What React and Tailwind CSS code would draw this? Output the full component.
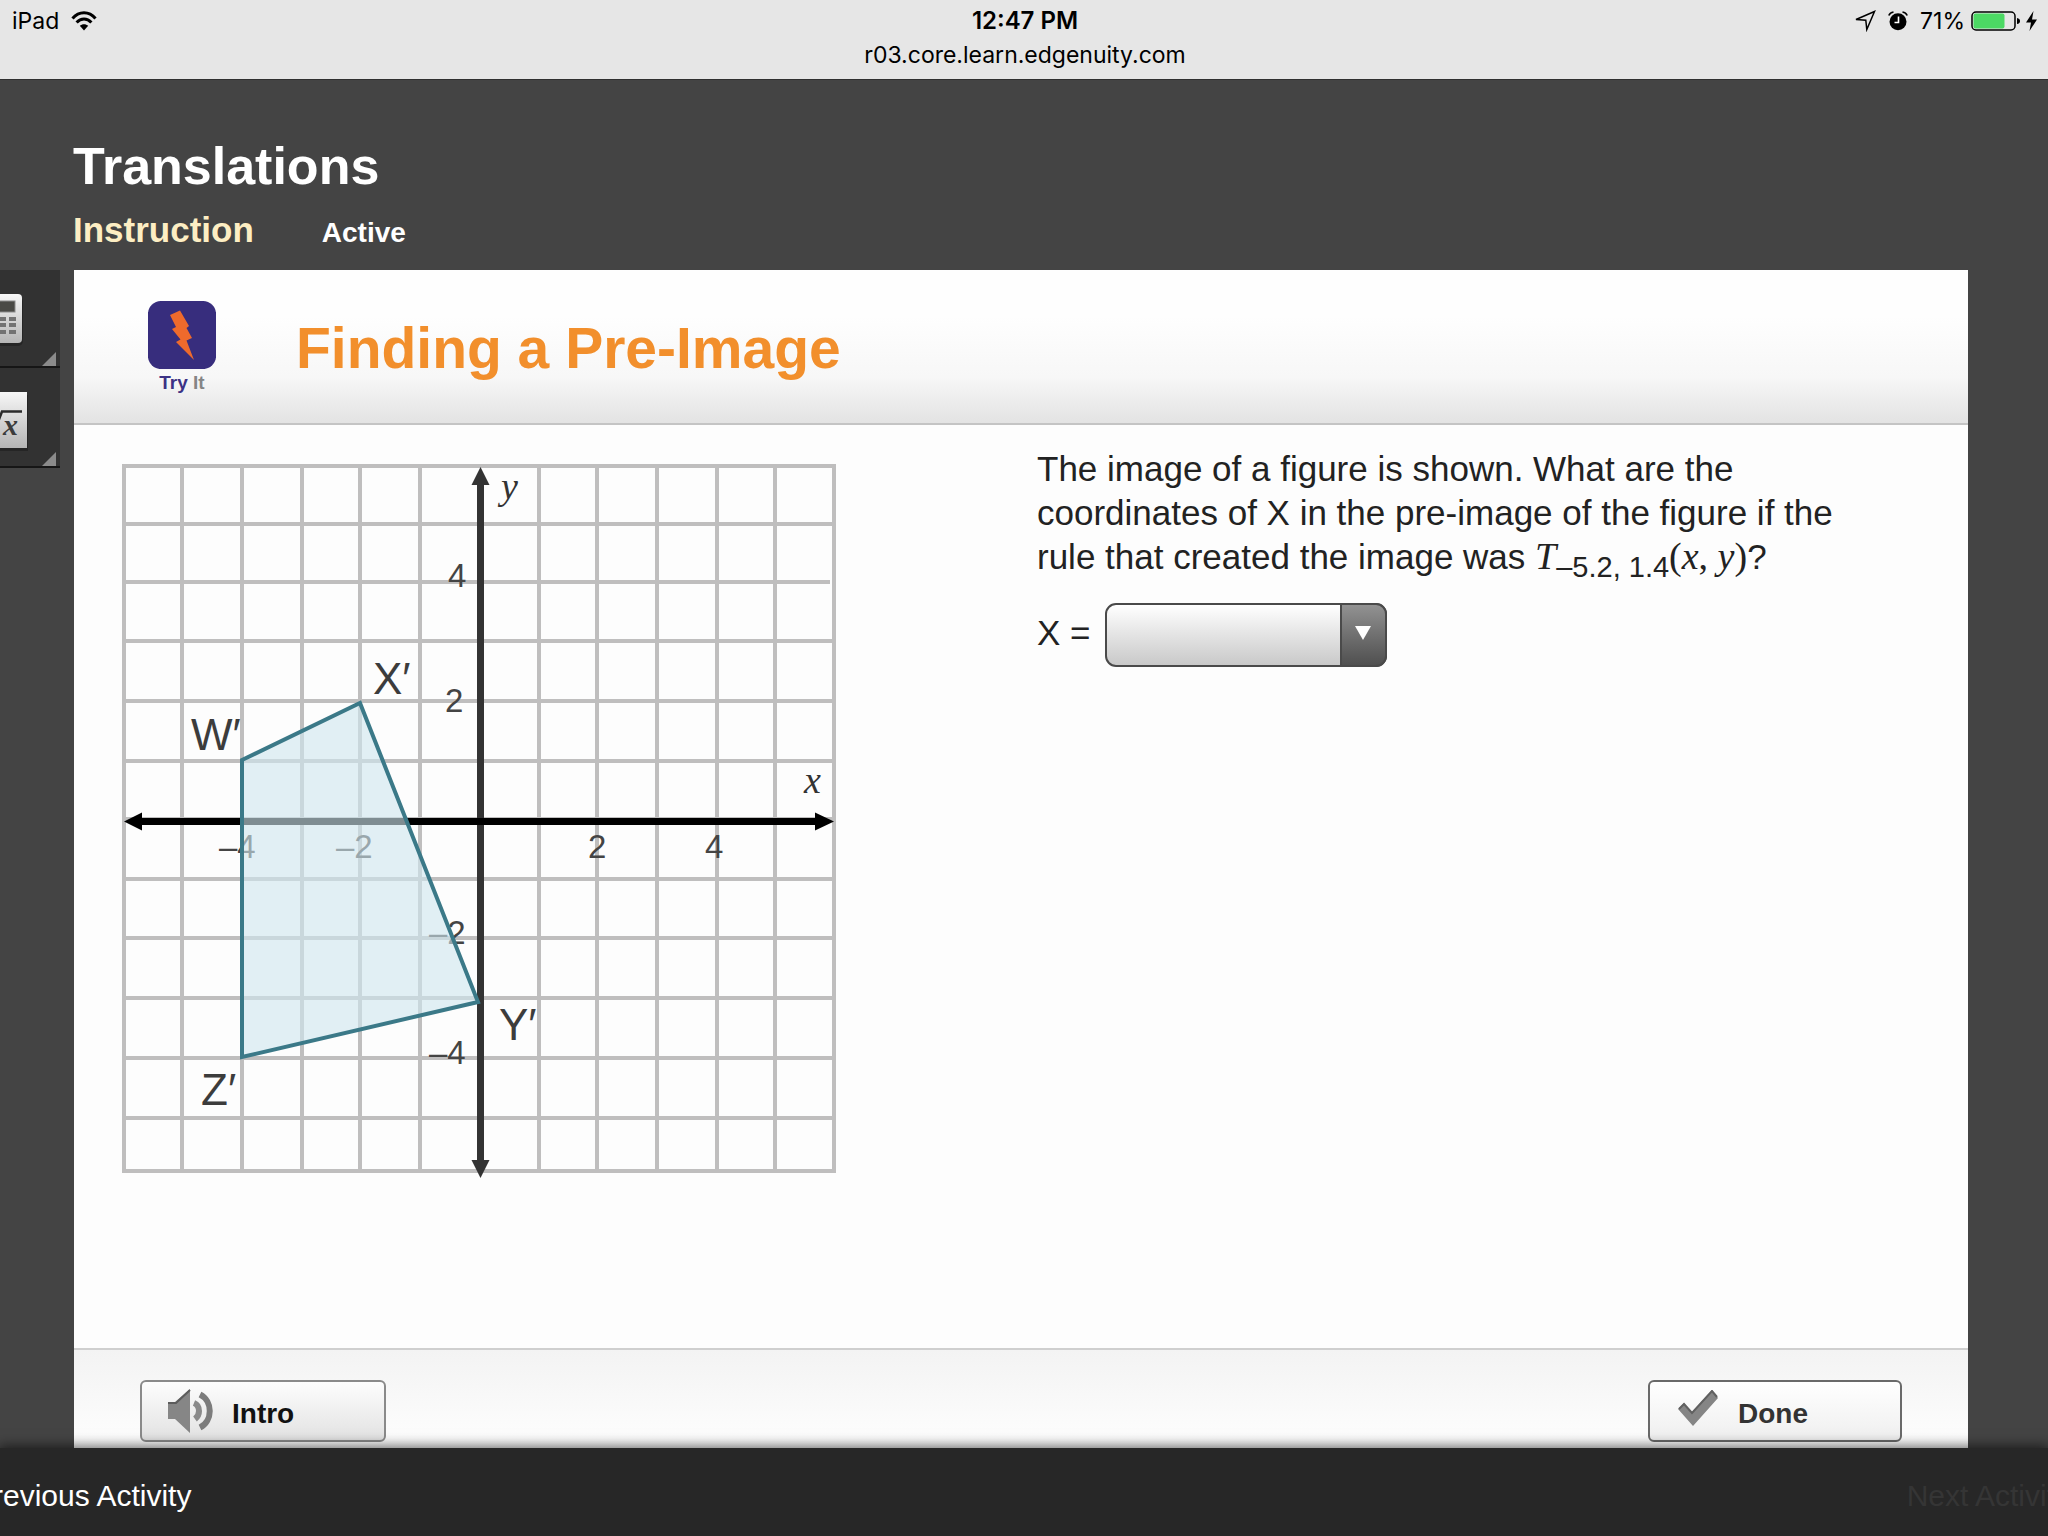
import React, { useState } from 'react';

// Grid line positions inside the graph
const gridX = [14, 72, 132, 192, 250, 310, 429, 487, 547, 607, 665, 724];
const gridY = [16, 74, 132, 191, 251, 311, 369, 429, 488, 548, 608, 668, 721];

const axisLabels = [
  { x: 338, y: 137, label: '4' },
  { x: 335, y: 262, label: '2' },
  { x: 319, y: 494, label: '–2' },
  { x: 319, y: 614, label: '–4' },
  { x: 109, y: 408, label: '–4' },
  { x: 226, y: 408, label: '–2' },
  { x: 478, y: 408, label: '2' },
  { x: 595, y: 408, label: '4' },
];

const pointLabels = [
  { x: 81, y: 300, label: 'W′' },
  { x: 263, y: 244, label: 'X′' },
  { x: 389, y: 590, label: 'Y′' },
  { x: 91, y: 655, label: 'Z′' },
];

// Status Bar Component
const StatusBar = () => (
  <header className="grid grid-cols-3 h-20 pt-1 pl-3 pr-2.5 bg-[#e6e6e6] border-b border-[#2f2f2f] text-black text-[23px] leading-[34px] font-['Inter',sans-serif]">
    <div className="flex items-center gap-3 h-[34px]">
      <span>iPad</span>
      <svg className="w-[26px] h-5" viewBox="0 0 26 20" fill="none" stroke="#000" strokeWidth="3">
        <path d="M1.5 7.5C8-.2 18-.2 24.500 7.500" />
        <path d="M5.600 11.600C10 6.800 16 6.800 20.400 11.600" />
        <path d="M13 19.500L8.800 14.800C11 12.600 15 12.600 17.200 14.800Z" fill="#000" stroke="none" />
      </svg>
    </div>
    <div className="text-center">
      <div className="font-semibold text-[24px]">12:47 PM</div>
      <div>r03.core.learn.edgenuity.com</div>
    </div>
    <div className="flex items-center justify-end h-[34px]">
      <svg className="w-[22px] h-[22px] mr-3" viewBox="0 0 22 22" fill="none" stroke="#000" strokeWidth="1.500">
        <path d="M2 9.500L20.500 1.500L12.800 19.500L11.800 10.200Z" />
      </svg>
      <svg className="w-5 h-5 mr-3" viewBox="0 0 20 20">
        <circle cx="10" cy="10.800" r="8.500" fill="#000" />
        <path d="M.8 4.500Q2 1.600 5.500 1M19.200 4.500Q18 1.600 14.500 1" fill="none" stroke="#000" strokeWidth="1.600" />
        <path d="M10.500 5.500V11.500H6.500" fill="none" stroke="#fff" strokeWidth="1.600" />
      </svg>
      <span>71%</span>
      <svg className="w-[50px] h-5 ml-1.5" viewBox="0 0 50 20">
        <rect x="1" y="1" width="43" height="18" rx="4" fill="none" stroke="#000" strokeWidth="1.500" />
        <rect x="2.500" y="2.500" width="31" height="15" rx="2" fill="#4cd964" />
        <path d="M46 7Q49 7.500 49 10Q49 12.500 46 13Z" fill="#000" />
      </svg>
      <svg className="w-[13px] h-5 ml-1" viewBox="0 0 13 20">
        <path d="M8.500 0L1 11.500H6L4.500 20L12 8.500H7Z" fill="#000" />
      </svg>
    </div>
  </header>
);

// Left Tool Rail
const ToolRail = () => (
  <aside className="w-[60px] shrink-0 mr-[14px]">
    <button aria-label="Calculator" className="block w-full h-[98px] bg-[#323232] border-b-2 border-[#161616]">
      <svg className="w-[60px] h-24" viewBox="0 0 60 96">
        <defs>
          <linearGradient id="key" x1="0" y1="0" x2="0" y2="1">
            <stop offset="0" stopColor="#f7f7f7" />
            <stop offset="1" stopColor="#b5b5b5" />
          </linearGradient>
        </defs>
        <rect x="-20" y="27" width="43" height="49" rx="5" fill="#1c1c1c" opacity=".6" />
        <rect x="-20" y="24" width="42" height="49" rx="4" fill="url(#key)" />
        <rect x="-16" y="31" width="31" height="11" fill="#4a4a46" stroke="#8b8b8b" />
        {[47, 53, 60].map(y => (
          <g key={y} fill="#737373">
            <rect x="0" y={y} width="6" height="4" />
            <rect x="9" y={y} width="7" height="4" />
          </g>
        ))}
        <path d="M56 82V96H42Z" fill="#8b8b8b" />
      </svg>
    </button>
    <button aria-label="Formulas" className="block w-full h-[100px] bg-[#323232] border-b-2 border-[#161616]">
      <svg className="w-[60px] h-[98px]" viewBox="0 0 60 98">
        <rect x="-20" y="27" width="48" height="56" fill="#1c1c1c" opacity=".6" />
        <rect x="-20" y="24" width="47" height="56" fill="url(#key)" />
        <path d="M-5 62L2 43.500H22" fill="none" stroke="#2a2a2a" strokeWidth="2.500" />
        <text x="3" y="67" className="font-['Liberation_Serif',serif] italic font-bold text-[30px]" fill="#3c3c3c">x</text>
        <path d="M56 84V98H42Z" fill="#8b8b8b" />
      </svg>
    </button>
  </aside>
);

// Coordinate Plane with the image figure
const Graph = () => (
  <svg className="w-[740px] h-[740px] shrink-0" viewBox="0 0 740 740" role="img" aria-label="Coordinate plane">
    <g stroke="#bfbebe" strokeWidth="4">
      {gridX.map(x => (
        <path key={x} d={`M${x} 14V723`} />
      ))}
      {gridY.map(y => (
        <path key={y} d={`M13 ${y}H${y === 132 ? 720 : 726}`} />
      ))}
    </g>

    <path d="M370.500 30V715" stroke="#333" strokeWidth="7" />
    <path d="M370.500 17L379.500 35H361.500ZM370.500 728L379.500 710H361.500Z" fill="#333" />
    <path d="M28 371.500H710" stroke="#000" strokeWidth="7" />
    <path d="M14 371.500L32 362.500V380.500ZM724 371.500L705 362.500V380.500Z" fill="#000" />

    <g className="font-['Liberation_Sans',sans-serif] text-[33px]" fill="#444">
      {axisLabels.map((l, i) => (
        <text key={i} x={l.x} y={l.y}>{l.label}</text>
      ))}
    </g>
    <g className="font-['Liberation_Serif',serif] italic text-[38px]" fill="#333">
      <text x="391" y="49">y</text>
      <text x="694" y="343">x</text>
    </g>

    <path d="M132 310L250 253L368 552L132 607Z" fill="#cfe6ee" fillOpacity=".61" stroke="#3b7988" strokeWidth="4" />

    <g className="font-['Liberation_Sans',sans-serif] text-[44px]" fill="#3c3c3c">
      {pointLabels.map(l => (
        <text key={l.label} x={l.x} y={l.y}>{l.label}</text>
      ))}
    </g>
  </svg>
);

const PanelHeader = () => (
  <div className="flex h-[155px] bg-linear-to-b from-[#fefefe] from-30% via-[#f7f7f7] via-70% to-[#e3e3e3] border-b-2 border-[#c4c4c4]">
    <div className="w-[68px] ml-[74px] mt-[31px]">
      <svg className="w-[68px] h-[68px]" viewBox="0 0 68 68">
        <path d="M13 0H55L68 12V56L56 68H12L0 56V12Z" fill="#372d7d" stroke="#372d7d" strokeLinejoin="round" />
        <rect width="68" height="68" rx="13" fill="#372d7d" />
        <path d="M22 14L32 9.500L41 25L38.500 27L44 37L38.500 39.500L46 59L28 41L32.500 38.500L24 28L28 26Z" fill="#ee6a2c" />
      </svg>
      <div className="text-center text-[19px] leading-[28px] font-bold text-[#3c3285]">
        Try <span className="text-[#858585]">It</span>
      </div>
    </div>
    <h2 className="ml-20 mt-[46px] text-[57px] leading-[64px] font-bold text-[#f28f2c]">Finding a Pre-Image</h2>
  </div>
);

const Question = () => {
  const [answer, setAnswer] = useState('');

  return (
    <div className="w-[840px] mt-[22px] text-[#222]">
      <p className="text-[35px] leading-[44px]">
        The image of a figure is shown. What are the<br />
        coordinates of X in the pre-image of the figure if the<br />
        rule that created the image was{' '}
        <i className="font-['Liberation_Serif',serif] text-[38px] leading-none">T</i>
        <span className="relative top-2 text-[29px] leading-none">–5.2, 1.4</span>
        <span className="font-['Liberation_Serif',serif] text-[38px] leading-none">(<i>x</i>, <i>y</i>)</span>?
      </p>
      <div className="flex items-center gap-[14px] mt-6">
        <label htmlFor="answer" className="pb-1 text-[35px] leading-[44px]">X =</label>
        <div className="relative w-[282px] h-16">
          <select
            id="answer"
            value={answer}
            onChange={e => setAnswer(e.target.value)}
            className="appearance-none w-full h-full px-4 rounded-[11px] border-2 border-[#4a4a4a] bg-linear-to-b from-white to-[#c9c9c9]"
          >
            <option value=""></option>
          </select>
          <div className="absolute right-0 inset-y-0 w-[47px] flex items-center justify-center rounded-r-[11px] border-2 border-[#4a4a4a] bg-linear-to-b from-[#929292] to-[#505050] pointer-events-none">
            <svg className="w-4 h-[14px] mb-1" viewBox="0 0 16 14">
              <path d="M0 0H16L8 14Z" fill="#fff" />
            </svg>
          </div>
        </div>
      </div>
    </div>
  );
};

const PanelFooter = () => (
  <div className="flex items-start justify-between h-[100px] pt-[30px] pl-[66px] pr-[66px] border-t-2 border-[#cfcfcf] bg-linear-to-b from-[#f3f3f3] to-[#fefefe]">
    <button className="flex items-center w-[246px] h-[62px] pl-[26px] gap-[18px] rounded-md border-2 border-[#8a8a8a] bg-linear-to-b from-[#fdfdfd] to-[#e2e2e2] text-[28px] leading-[32px] font-bold text-[#111]">
      <svg className="w-[46px] h-11" viewBox="0 0 46 44">
        <path d="M0 13H7L22 0V44L7 30H0Z" fill="#868686" />
        <path d="M0 14H8L22 1" fill="none" stroke="#5c5c5c" strokeWidth="2" />
        <path d="M26 14Q31 16 31 22Q31 27 27 30" fill="none" stroke="#8a8a8a" strokeWidth="6" />
        <path d="M32 5.500C45 12 45 32 32 38.500" fill="none" stroke="#7c7c7c" strokeWidth="6" />
      </svg>
      <span className="pt-1.5">Intro</span>
    </button>
    <button className="flex items-center w-[254px] h-[62px] pl-[28px] gap-5 rounded-md border-2 border-[#6a6a6a] bg-linear-to-b from-white to-[#efefef] text-[28px] leading-[32px] font-bold text-[#333]">
      <svg className="w-10 h-9 mb-1.5" viewBox="0 0 40 36">
        <path d="M0 19L6 13L14 22L34 0L40 8L15 36Z" fill="#858585" />
        <path d="M1 19L6 14L14 23L34 1L39 7" fill="none" stroke="#606060" strokeWidth="2" />
      </svg>
      <span className="pt-1.5">Done</span>
    </button>
  </div>
);

// Main App Component
export default function App() {
  return (
    <div className="flex flex-col min-h-screen overflow-hidden bg-[#444] font-['Liberation_Sans',Arial,sans-serif]">
      <StatusBar />

      <div className="pl-[73px] pt-[54px] pb-[14px]">
        <h1 className="text-[52px] leading-[64px] font-bold text-white">Translations</h1>
        <div className="flex items-baseline gap-[68px] mt-[9px] font-bold leading-[46px]">
          <span className="text-[35px] text-[#fdeec3]">Instruction</span>
          <span className="text-[28px] text-white">Active</span>
        </div>
      </div>

      <main className="flex flex-1 pr-20">
        <ToolRail />
        <section className="flex flex-col flex-1 bg-[#fdfdfd]">
          <PanelHeader />
          <div className="flex flex-1 gap-[187px] pl-9">
            <div className="pt-[25px]">
              <Graph />
            </div>
            <Question />
          </div>
          <PanelFooter />
        </section>
      </main>

      <nav className="relative flex items-center justify-between h-[88px] bg-[#272727] text-[30px] leading-[40px] whitespace-nowrap shadow-[0_0_12px_2px_rgba(0,0,0,0.6)]">
        <a href="#previous" className="-ml-[27px] pt-2 text-white">Previous Activity</a>
        <a href="#next" className="-mr-[22px] pt-2 text-[#353535]">Next Activity</a>
      </nav>
    </div>
  );
}
